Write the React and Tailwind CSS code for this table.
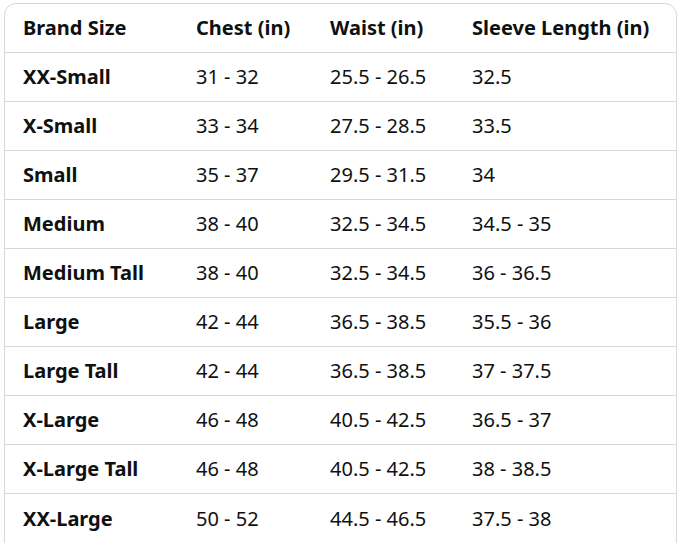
import React from "react";

const rows = [
  ["XX-Small", "31 - 32", "25.5 - 26.5", "32.5"],
  ["X-Small", "33 - 34", "27.5 - 28.5", "33.5"],
  ["Small", "35 - 37", "29.5 - 31.5", "34"],
  ["Medium", "38 - 40", "32.5 - 34.5", "34.5 - 35"],
  ["Medium Tall", "38 - 40", "32.5 - 34.5", "36 - 36.5"],
  ["Large", "42 - 44", "36.5 - 38.5", "35.5 - 36"],
  ["Large Tall", "42 - 44", "36.5 - 38.5", "37 - 37.5"],
  ["X-Large", "46 - 48", "40.5 - 42.5", "36.5 - 37"],
  ["X-Large Tall", "46 - 48", "40.5 - 42.5", "38 - 38.5"],
  ["XX-Large", "50 - 52", "44.5 - 46.5", "37.5 - 38"],
];

const headers = ["Brand Size", "Chest (in)", "Waist (in)", "Sleeve Length (in)"];

function Row({ cells, header, last }) {
  return (
    <div
      className={`grid grid-cols-[173px_134px_142px_1fr] h-[49px] ${
        last ? "" : "border-b border-[#d5d9d9]"
      }`}
    >
      {cells.map((c, i) => (
        <div
          key={i}
          className={`flex items-center pl-[18px] whitespace-nowrap ${
            header || i === 0 ? "font-bold" : "font-normal"
          }`}
        >
          {c}
        </div>
      ))}
    </div>
  );
}

export default function App() {
  return (
    <div className="w-[681px] h-[543px] bg-white pt-[3px] pl-[4px]">
      <div
        className="w-[673px] border border-[#d5d9d9] rounded-t-[12px] text-[20px] text-[#0f1111]"
        style={{ fontFamily: '"Noto Sans", "Open Sans", sans-serif' }}
      >
        <Row cells={headers} header />
        {rows.map((r, i) => (
          <Row key={r[0]} cells={r} last={i === rows.length - 1} />
        ))}
      </div>
    </div>
  );
}
